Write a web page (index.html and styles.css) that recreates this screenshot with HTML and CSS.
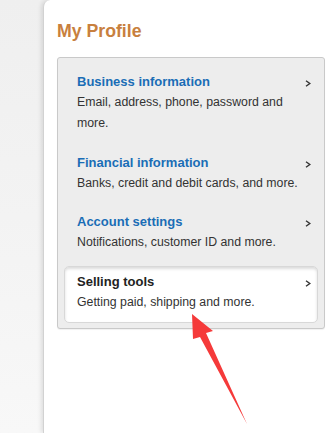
FILE: index.html
```html
<!DOCTYPE html>
<html lang="en">
<head>
<meta charset="utf-8">
<title>My Profile</title>
<link rel="stylesheet" href="styles.css">
</head>
<body>
<div class="page">
  <main class="panel">
    <h1 class="panel-title">My Profile</h1>
    <ul class="menu">
      <li class="menu-item">
        <div class="item-text">
          <div class="item-title">Business information</div>
          <div class="item-desc">Email, address, phone, password and more.</div>
        </div>
        <svg class="chev" viewBox="0 0 6 7" width="6" height="7"><polyline points="1,0.8 4.8,3.5 1,6.2"/></svg>
      </li>
      <li class="menu-item">
        <div class="item-text">
          <div class="item-title">Financial information</div>
          <div class="item-desc">Banks, credit and debit cards, and more.</div>
        </div>
        <svg class="chev" viewBox="0 0 6 7" width="6" height="7"><polyline points="1,0.8 4.8,3.5 1,6.2"/></svg>
      </li>
      <li class="menu-item">
        <div class="item-text">
          <div class="item-title">Account settings</div>
          <div class="item-desc">Notifications, customer ID and more.</div>
        </div>
        <svg class="chev" viewBox="0 0 6 7" width="6" height="7"><polyline points="1,0.8 4.8,3.5 1,6.2"/></svg>
      </li>
      <li class="menu-item is-active">
        <div class="item-text">
          <div class="item-title">Selling tools</div>
          <div class="item-desc">Getting paid, shipping and more.</div>
        </div>
        <svg class="chev" viewBox="0 0 6 7" width="6" height="7"><polyline points="1,0.8 4.8,3.5 1,6.2"/></svg>
      </li>
    </ul>
  </main>
</div>
<svg class="annotation" viewBox="0 0 335 433" width="335" height="433">
  <polygon points="192,314 213,331 206,333 247,424 200,337 193,339"/>
</svg>
</body>
</html>
```
FILE: styles.css
```css
html, body {
  margin: 0;
  padding: 0;
}
body {
  width: 335px;
  height: 433px;
  overflow: hidden;
  position: relative;
  font-family: "Liberation Sans", Arial, sans-serif;
  background: linear-gradient(180deg, #efefef 0%, #f3f3f3 50%, #f8f8f8 100%);
}
.page {
  display: flex;
  padding-left: 43px;
  height: 100%;
  box-sizing: border-box;
}
.panel {
  flex: 1;
  background: #ffffff;
  border-left: 1px solid #d2d2d2;
  border-top-left-radius: 7px;
  box-shadow: -2px 0 4px rgba(0, 0, 0, 0.10);
  padding: 20px 10px 0 13px;
}
.panel-title {
  margin: 0 0 15px;
  font-size: 17.7px;
  line-height: 22px;
  font-weight: bold;
  color: #c8803e;
}
.menu {
  list-style: none;
  margin: 0;
  padding: 8px 6px 5px;
  background: #ededed;
  border: 1px solid #c9c9c9;
  border-radius: 3px;
  box-shadow: 0 1px 1px rgba(0, 0, 0, 0.06);
  display: flex;
  flex-direction: column;
  gap: 2.5px;
}
.menu-item {
  display: flex;
  align-items: flex-start;
  gap: 4px;
  padding: 5px 6px 9px 12px;
  border: 1px solid transparent;
  border-radius: 5px;
}
.menu-item.is-active {
  background: #ffffff;
  border-color: #d8d8d8;
  box-shadow: inset 0 2px 3px rgba(0, 0, 0, 0.14);
}
.item-text {
  flex: 1;
  min-width: 0;
}
.item-title {
  font-size: 13px;
  line-height: 20px;
  font-weight: bold;
  color: #1a6db6;
}
.is-active .item-title {
  color: #222222;
}
.item-desc {
  font-size: 12.3px;
  line-height: 21px;
  color: #333333;
}
.chev {
  flex: none;
  margin-top: 8px;
  fill: none;
  stroke: #333333;
  stroke-width: 1.4;
}
.annotation {
  position: absolute;
  top: 0;
  left: 0;
  pointer-events: none;
  fill: #f53a3a;
}
```
